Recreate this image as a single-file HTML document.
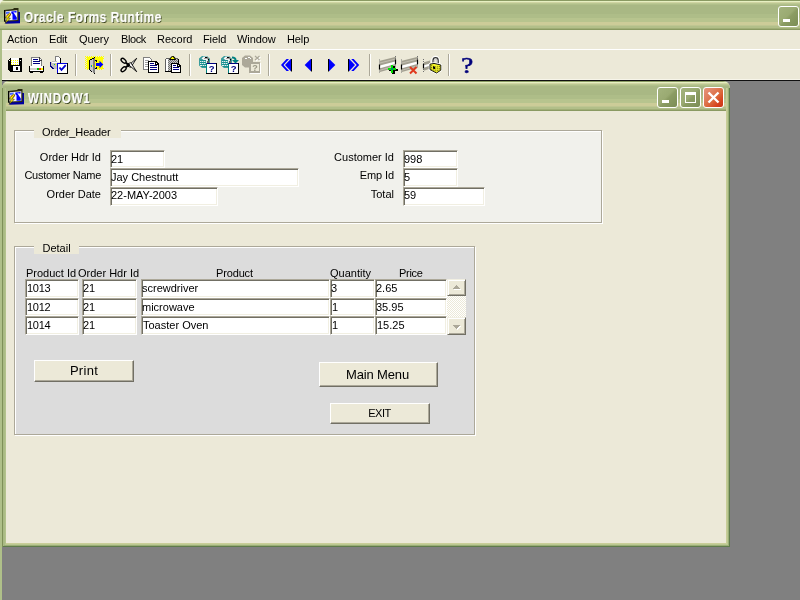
<!DOCTYPE html>
<html lang="en">
<head>
<meta charset="utf-8">
<title>Oracle Forms Runtime</title>
<style>
*{box-sizing:border-box;margin:0;padding:0}
html,body{width:800px;height:600px;overflow:hidden;background:#808080}
#corner{left:0;top:0;width:6px;height:6px;background:#f4f3ea}
#tbhl{left:2px;top:79px;width:798px;height:1px;background:#f7f5ea}
body{position:relative;font-family:"Liberation Sans",sans-serif;font-size:11px;color:#000;line-height:13px}
.abs{position:absolute}
#mtitle{left:0;top:0;width:800px;height:30px;border-top-left-radius:5px;background:linear-gradient(to bottom,#8a9a62 0px,#8a9a62 1px,#e6f0c2 1px,#e6f0c2 2px,#d0d4a2 2px,#d0d4a2 3px,#bac892 3px,#bac892 4px,#b1bf8a 4px,#b1bf8a 5px,#a9b884 5px,#a9b884 14px,#aebd88 14px,#aebd88 18px,#b7c48e 18px,#b7c48e 22px,#cccc98 22px,#cccc98 25px,#bfc692 25px,#bfc692 26px,#b2bf89 26px,#b2bf89 28px,#a0ae76 28px,#a0ae76 29px,#8a9a62 29px,#8a9a62 30px)}
.ttext{-webkit-text-stroke:0.25px #fff;color:#fff;font-weight:bold;white-space:nowrap;text-shadow:1px 1px 0 #39421c;transform-origin:0 0}
#menubar{left:0;top:30px;width:800px;height:20px;background:#ece9d8;border-bottom:1px solid #fff}
#menubar span{position:absolute;top:3px;white-space:nowrap}
#toolbar{left:0;top:50px;width:800px;height:30px;background:#ece9d8}
#tbline{left:0;top:80px;width:800px;height:1px;background:#101010}
#lborder{left:0;top:30px;width:2px;height:570px;background:#afc089}
.sep{position:absolute;top:54px;width:2px;height:22px;border-left:1px solid #aca899;border-right:1px solid #fff}
#child{left:2px;top:81px;width:728px;height:466px;background:#ece9d8;border-radius:7px 7px 0 0;overflow:hidden}
#ctitle{left:0;top:0;width:728px;height:30px;background:linear-gradient(to bottom,#8a9a62 0px,#8a9a62 1px,#e6f0c2 1px,#e6f0c2 2px,#d0d4a2 2px,#d0d4a2 3px,#bac892 3px,#bac892 4px,#b1bf8a 4px,#b1bf8a 5px,#a9b884 5px,#a9b884 14px,#aebd88 14px,#aebd88 18px,#b7c48e 18px,#b7c48e 22px,#cccc98 22px,#cccc98 25px,#bfc692 25px,#bfc692 26px,#b2bf89 26px,#b2bf89 28px,#a0ae76 28px,#a0ae76 29px,#8a9a62 29px,#8a9a62 30px)}
.cframe{left:0;top:7px;width:728px;height:459px;box-shadow:inset 1px 0 0 #7e9058,inset -1px -1px 0 #5f7b4c,inset 2px 0 0 #a9ba83,inset -2px -2px 0 #9bad76,inset 3px 0 0 #abbc85,inset -3px -3px 0 #bac991,inset 4px 0 0 #b3c38c,inset -4px -4px 0 #c9cd99}
.grp{position:absolute;border:1px solid #aca899;box-shadow:inset 1px 1px 0 #fff, 1px 1px 0 #fff}
.legend{position:absolute;background:#ece9d8;height:14px;white-space:nowrap}
.lbl{position:absolute;white-space:nowrap;height:13px}
.lbl,.legend,.fld,.btn,#menubar span,.ttext{will-change:transform}
.r{text-align:right}
.fld{position:absolute;background:#fff;border:1px solid;border-color:#aca899 #fff #fff #aca899;box-shadow:inset 1px 1px 0 #716f64, inset -1px -1px 0 #f1efe2;white-space:nowrap;overflow:hidden;padding:2px 0 0 0;line-height:13px}
.btn{position:absolute;background:#ece9d8;border:1px solid;border-color:#fff #716f64 #716f64 #fff;box-shadow:inset -1px -1px 0 #aca899;text-align:center;white-space:nowrap}
.sbtn{position:absolute;background:#ece9d8;border:1px solid;border-color:#f1efe2 #716f64 #716f64 #f1efe2;box-shadow:inset 1px 1px 0 #fff,inset -1px -1px 0 #aca899}
.cbtn{position:absolute;width:21px;height:21px;border:1px solid #fff;border-radius:3px;background:linear-gradient(135deg,#a3b37d 0,#9aaa72 45%,#8b9c63 55%,#7b8d55 100%)}
.cbtn.x{background:linear-gradient(135deg,#e6957c 0,#e08060 30%,#dc6a3c 55%,#d6421e 80%,#c83818 100%)}
svg{position:absolute;overflow:visible}
</style>
</head>
<body>
<div id="corner" class="abs"></div>
<div id="mtitle" class="abs"></div>
<svg width="18" height="18" viewBox="3 7 18 18" style="left:3px;top:7px">
<path d="M5 20.500L18 20V12h2v11.200L5.500 23.800z" fill="#0000a0"/>
<path d="M4 10L13 9l1-1h4.500V21L4 21.600z" fill="#2a2a10"/>
<path d="M5.500 11.300L17.300 10.200V20L5.500 20.400z" fill="#f4f4fa"/>
<path d="M6 12l3.800-0.400l-1 1.800L6 14z" fill="#4466ff"/><path d="M4 10v11.600h1V10z" fill="#000"/>
<path d="M11.300 11.600l5.200-0.500v1.500l-3-0.200l3.300 5v2.300l-4.300 0.100v-5.500l-1.200-1z" fill="#0000ff"/>
<path d="M13 12l1.500-0.200v1z" fill="#fff"/>
<path d="M6 15l3.500-1.500l1.500 1.500l-2 2.500z" fill="#e86a50"/>
<path d="M9.700 13L4.900 17.700l2.300 0.400L5.300 23.300l5-5l-2.300-0.500l2.900-3.800z" fill="#ffee00" stroke="#141400" stroke-width="0.550" stroke-linejoin="round"/>
</svg>
<div class="abs ttext" id="mt" style="left:23.500px;top:9px;font-size:14px;line-height:16px;letter-spacing:0.6px;transform:scaleX(0.85)">Oracle Forms Runtime</div>
<div class="cbtn" style="left:778px;top:6px"><i class="abs" style="left:4px;top:12px;width:7px;height:3px;background:#fff"></i></div>
<div id="menubar" class="abs">
<span style="left:7px">Action</span><span style="left:49px;letter-spacing:-0.2px">Edit</span><span style="left:79px">Query</span><span style="left:121px;letter-spacing:-0.4px">Block</span><span style="left:157px">Record</span><span style="left:203px;letter-spacing:-0.1px">Field</span><span style="left:237px;letter-spacing:-0.1px">Window</span><span style="left:287px;letter-spacing:-0.1px">Help</span>
</div>
<div id="toolbar" class="abs"></div>
<div id="tbhl" class="abs"></div>
<div id="tbline" class="abs"></div>
<div id="lborder" class="abs"></div>
<div class="sep" style="left:75px"></div>
<div class="sep" style="left:110px"></div>
<div class="sep" style="left:189px"></div>
<div class="sep" style="left:268px"></div>
<div class="sep" style="left:369px"></div>
<div class="sep" style="left:448px"></div>

<div id="child" class="abs">
 <div id="ctitle" class="abs"></div>
 <svg width="18" height="18" viewBox="3 7 18 18" style="left:5px;top:7px">
<path d="M5 20.500L18 20V12h2v11.200L5.500 23.800z" fill="#0000a0"/>
<path d="M4 10L13 9l1-1h4.500V21L4 21.600z" fill="#2a2a10"/>
<path d="M5.500 11.300L17.300 10.200V20L5.500 20.400z" fill="#f4f4fa"/>
<path d="M6 12l3.800-0.400l-1 1.800L6 14z" fill="#4466ff"/><path d="M4 10v11.600h1V10z" fill="#000"/>
<path d="M11.300 11.600l5.200-0.500v1.500l-3-0.200l3.300 5v2.300l-4.300 0.100v-5.500l-1.200-1z" fill="#0000ff"/>
<path d="M13 12l1.500-0.200v1z" fill="#fff"/>
<path d="M6 15l3.500-1.500l1.500 1.500l-2 2.500z" fill="#e86a50"/>
<path d="M9.700 13L4.900 17.700l2.300 0.400L5.300 23.300l5-5l-2.300-0.500l2.900-3.800z" fill="#ffee00" stroke="#141400" stroke-width="0.550" stroke-linejoin="round"/>
</svg>
 <div class="abs ttext" id="ct" style="left:25.500px;top:9px;font-size:14px;line-height:16px;letter-spacing:1px;transform:scaleX(0.82)">WINDOW1</div>
 <div class="abs cframe"></div>
 <div class="cbtn" style="left:655px;top:6px"><i class="abs" style="left:4px;top:12px;width:7px;height:3px;background:#fff"></i></div>
 <div class="cbtn" style="left:678px;top:6px"><i class="abs" style="left:4px;top:4px;width:11px;height:11px;border:1px solid #fff;border-top-width:3px"></i></div>
 <div class="cbtn x" style="left:701px;top:6px"><svg width="19" height="19" viewBox="0 0 19 19" style="left:0;top:0"><path d="M4.500 4.500L14.500 14.500M14.500 4.500L4.500 14.500" stroke="#fff" stroke-width="2.400" fill="none"/></svg></div>
</div>
<svg width="800" height="30" viewBox="0 50 800 30" style="left:0;top:50px;will-change:transform" shape-rendering="crispEdges">
<!-- save -->
<g>
<path d="M10 58h11l1 1v12l-1 1h-11l-2-2v-10z" fill="#000"/>
<rect x="11" y="58" width="8" height="7" fill="#fff"/>
<path d="M11 60h1v1h-1zM13 60h1v1h-1zM15 60h1v1h-1zM17 60h1v1h-1zM11 62h1v1h-1zM13 62h1v1h-1zM15 62h1v1h-1zM17 62h1v1h-1zM11 64h1v1h-1zM13 64h1v1h-1zM15 64h1v1h-1zM17 64h1v1h-1z" fill="#ffff00"/>
<rect x="9" y="60" width="1" height="1" fill="#fff"/><rect x="20" y="60" width="1" height="1" fill="#fff"/>
<rect x="13" y="66" width="7" height="5" fill="#fff"/><rect x="16" y="67" width="2" height="3" fill="#000"/>
</g>
<!-- print -->
<g>
<path d="M31.5 66.5v-9h8l2 2v7z" fill="#fff" stroke="#808080"/>
<path d="M39 57v3h3" fill="none" stroke="#404040"/>
<rect x="33" y="59" width="5" height="1" fill="#000080"/><rect x="33" y="61" width="7" height="1" fill="#000080"/><rect x="33" y="63" width="7" height="1" fill="#000080"/>
<rect x="29" y="66" width="15" height="6" fill="#000"/>
<rect x="30" y="66" width="13" height="5" fill="#fff"/>
<rect x="30" y="68" width="13" height="2" fill="#d4d0c8"/>
<rect x="37" y="68" width="2" height="2" fill="#00c000"/><rect x="39" y="68" width="2" height="2" fill="#e03020"/><rect x="41" y="68" width="2" height="2" fill="#ffff00"/>
<rect x="30" y="72" width="3" height="1" fill="#000"/><rect x="40" y="72" width="3" height="1" fill="#000"/>
</g>
<!-- print setup -->
<g>
<path d="M55.5 62v-5.500h3l2 2v4" fill="#fff" stroke="#808080"/>
<path d="M60.500 58v5" stroke="#000" fill="none"/>
<path d="M50 62l3-1h4v8h-3l-4-3z" fill="#c0c0c0"/>
<path d="M50.500 62v4l3 3" fill="none" stroke="#000080"/>
<rect x="52" y="62" width="5" height="1" fill="#fff"/>
<rect x="54" y="64" width="1" height="1" fill="#00a0a0"/><rect x="55" y="64" width="1" height="1" fill="#ffff00"/>
<rect x="57" y="63" width="11" height="11" fill="#000"/>
<rect x="57" y="63" width="10" height="10" fill="#0000e0"/>
<rect x="58" y="64" width="9" height="9" fill="#fff"/>
<path d="M59.500 67.500l2 2.300l4.200-4.600" fill="none" stroke="#0000d0" stroke-width="1.800" shape-rendering="auto"/>
</g>
<!-- exit -->
<g>
<rect x="87" y="57" width="16" height="12" fill="#ffff00"/><path d="M86 57h1v1h-1zM86 59h1v1h-1zM86 61h1v1h-1zM86 63h1v1h-1zM86 65h1v1h-1zM86 67h1v1h-1z" fill="#ffff00"/>
<path d="M85 56h1v1h-1zM87 56h1v1h-1zM89 56h1v1h-1zM91 56h1v1h-1zM93 56h1v1h-1zM95 56h1v1h-1zM97 56h1v1h-1zM99 56h1v1h-1zM101 56h1v1h-1zM103 56h1v1h-1zM85 58h1v1h-1zM85 60h1v1h-1zM85 62h1v1h-1zM85 64h1v1h-1zM85 66h1v1h-1zM85 68h1v1h-1zM103 58h1v1h-1zM103 68h1v1h-1zM101 69h1v1h-1zM99 69h1v1h-1zM97 69h1v1h-1zM87 69h1v1h-1z" fill="#ffff00"/>
<path d="M89 60l6-3v17l-6-4z" fill="#000"/>
<path d="M90 60.500l3-1.500v13l-3-2z" fill="#c8c8c8"/>
<path d="M93 59l1.500-0.800v15l-1.500-1z" fill="#808080"/>
<rect x="91" y="65" width="1" height="2" fill="#00a0a0"/><rect x="92" y="65" width="1" height="1" fill="#ffff00"/>
<rect x="95" y="60" width="2" height="1" fill="#000"/><rect x="95" y="68" width="2" height="1" fill="#000"/><rect x="96" y="61" width="1" height="1" fill="#000"/><rect x="96" y="67" width="1" height="1" fill="#000"/>
<path d="M96 63h3.500v-2.300l3.800 3.800l-3.800 3.800v-2.300h-3.500z" fill="#0000ff" shape-rendering="auto"/>
</g>
<!-- cut -->
<g shape-rendering="auto" fill="none" stroke="#000">
<ellipse cx="123.600" cy="60.800" rx="3" ry="1.700" transform="rotate(42 123.600 60.800)" stroke-width="1.400"/>
<ellipse cx="123.600" cy="69.200" rx="3" ry="1.700" transform="rotate(-42 123.600 69.200)" stroke-width="1.400"/>
<path d="M127.500 66.200L136.700 58.300L130.800 67.300z" fill="#fff" stroke-width="0.900"/>
<path d="M127.500 63.800L136.700 71.700L130.800 62.700z" fill="#fff" stroke-width="0.900"/>
<path d="M126 62.800L129.500 66M126 67.200L129.500 64" stroke-width="2"/>
</g>
<!-- copy -->
<g>
<path d="M143.500 57.500h6l2 2v9.500h-8z" fill="#fff" stroke="#808080"/>
<rect x="145" y="60" width="4" height="1" fill="#a0a0a0"/><rect x="145" y="62" width="4" height="1" fill="#a0a0a0"/><rect x="145" y="64" width="4" height="1" fill="#a0a0a0"/><rect x="145" y="66" width="4" height="1" fill="#a0a0a0"/>
<path d="M148 61h8l3 3v9h-11z" fill="#000"/>
<path d="M149 62h6.500l2.500 2.500v7.500h-9z" fill="#fff"/>
<path d="M155.500 61.500v3h3" fill="none" stroke="#000"/>
<rect x="150" y="63" width="4" height="1" fill="#000080"/><rect x="150" y="65" width="7" height="1" fill="#000080"/><rect x="150" y="67" width="7" height="1" fill="#000080"/><rect x="150" y="69" width="7" height="1" fill="#000080"/>
</g>
<!-- paste -->
<g>
<defs><pattern id="dth" width="2" height="2" patternUnits="userSpaceOnUse"><rect width="2" height="2" fill="#c8c8c8"/><rect width="1" height="1" fill="#707070"/><rect x="1" y="1" width="1" height="1" fill="#707070"/></pattern></defs><path d="M165.500 59.500l1-1h11l1 1v12h-13z" fill="url(#dth)" stroke="#606060"/>
<rect x="165" y="71" width="8" height="1" fill="#000"/>
<rect x="166" y="59" width="2" height="12" fill="#fff"/>
<path d="M169 60l1.500-2.500l1.500-1.500h1.500l1.500 1.500l1 2.500z" fill="#000" shape-rendering="auto"/>
<path d="M170.500 59l2-2.500l2.200 2.500z" fill="#ffff00" shape-rendering="auto"/>
<rect x="178" y="59" width="1" height="4" fill="#000"/>
<path d="M171 63h7l3 3v7h-10z" fill="#000"/>
<path d="M172 64h5.500l2.500 2.500v5.500h-8z" fill="#fff"/>
<path d="M177.500 63.500v3h3" fill="none" stroke="#000"/>
<rect x="173" y="65" width="3" height="1" fill="#000080"/><rect x="173" y="67" width="6" height="1" fill="#000080"/><rect x="173" y="69" width="6" height="1" fill="#000080"/>
</g>
<!-- enter query -->
<g>
<path d="M199 58.500l3-2.500h5l3 2.500v7l-3 2.500h-5l-3-2.500z" fill="#3a9c9c" shape-rendering="auto"/>
<path d="M200 59.500h8v6l-1 1.500h-5l-2-1.500z" fill="#e4f0f0"/>
<path d="M200 60h6v1h-6zM200 62h6v1h-6zM200 64h6v1h-6zM201 66h5v1h-5z" fill="#189090"/>
<path d="M201 61h1v1h-1zM203 61h1v1h-1zM205 61h1v1h-1zM201 63h1v1h-1zM203 63h1v1h-1zM205 63h1v1h-1zM202 65h1v1h-1zM204 65h1v1h-1z" fill="#70b8b8"/>
<path d="M201.500 58.500l2-2h3.500l2.500 2l-2.500 1.500h-3.500z" fill="#f4f4f4" shape-rendering="auto"/>
<path d="M205 57.500h2l1.500 1.300v1.700" stroke="#000" fill="none" shape-rendering="auto" stroke-width="1"/>
<rect x="204" y="58" width="3" height="1" fill="#a0a0a0"/>
<rect x="207" y="61" width="2" height="2" fill="#606060"/>
</g>
<g>
<rect x="206" y="63" width="11" height="11" fill="#000"/>
<rect x="206" y="63" width="10" height="10" fill="#008080"/>
<rect x="207" y="63" width="9" height="1" fill="#000080"/>
<rect x="207" y="64" width="9" height="9" fill="#fff"/>
</g>
<text x="211.600" y="72.400" font-family="Liberation Sans, sans-serif" font-weight="bold" font-size="9.500" fill="#000080" text-anchor="middle">?</text>
<!-- execute query -->
<g transform="translate(22 0)">
<path d="M199 58.500l3-2.500h5l3 2.500v7l-3 2.500h-5l-3-2.500z" fill="#3a9c9c" shape-rendering="auto"/>
<path d="M200 59.500h8v6l-1 1.500h-5l-2-1.500z" fill="#e4f0f0"/>
<path d="M200 60h6v1h-6zM200 62h6v1h-6zM200 64h6v1h-6zM201 66h5v1h-5z" fill="#189090"/>
<path d="M201 61h1v1h-1zM203 61h1v1h-1zM205 61h1v1h-1zM201 63h1v1h-1zM203 63h1v1h-1zM205 63h1v1h-1zM202 65h1v1h-1zM204 65h1v1h-1z" fill="#70b8b8"/>
<path d="M201.500 58.500l2-2h3.500l2.500 2l-2.500 1.500h-3.500z" fill="#f4f4f4" shape-rendering="auto"/>
<path d="M205 57.500h2l1.500 1.300v1.700" stroke="#000" fill="none" shape-rendering="auto" stroke-width="1"/>
<rect x="204" y="58" width="3" height="1" fill="#a0a0a0"/>
<rect x="207" y="61" width="2" height="2" fill="#606060"/>
</g><g transform="translate(22 0)">
<rect x="206" y="63" width="11" height="11" fill="#000"/>
<rect x="206" y="63" width="10" height="10" fill="#008080"/>
<rect x="207" y="63" width="9" height="1" fill="#000080"/>
<rect x="207" y="64" width="9" height="9" fill="#fff"/>
</g>
<text x="233.600" y="72.400" font-family="Liberation Sans, sans-serif" font-weight="bold" font-size="9.500" fill="#000080" text-anchor="middle">?</text>
<path d="M232 56.500c3 0 4.500 1.500 4.500 3.500h2.500l-3.500 3.500l-3.500-3.500h2.500c0-1-1-1.500-2.500-1.500z" fill="#008080" shape-rendering="auto"/>
<!-- cancel query (disabled) -->
<g>
<path d="M242 58l3-2.500h5l3 2.500v7l-3 2.500h-5l-3-2.500z" fill="#aca899" shape-rendering="auto"/>
<path d="M245 58.500h1.500l1.500-1h2l1 1" stroke="#fff" fill="none" stroke-dasharray="2 1"/>
<path d="M255 56l4.500 4M259.500 56l-4.500 4" stroke="#fff" stroke-width="1.200" fill="none" shape-rendering="auto" transform="translate(1 1)"/>
<path d="M255 56l4.500 4M259.500 56l-4.500 4" stroke="#aca899" stroke-width="1.200" fill="none" shape-rendering="auto"/>
<rect x="250" y="63" width="11" height="11" fill="#fff"/>
<rect x="249" y="62" width="11" height="11" fill="#aca899"/>
<rect x="251" y="64" width="8" height="7" fill="#ece9d8"/>
</g>
<text x="255" y="71.200" font-family="Liberation Sans, sans-serif" font-weight="bold" font-size="9" fill="#9a9786" text-anchor="middle">?</text>
<!-- nav: first -->
<g shape-rendering="auto">
<path d="M281 65l5.500-6h2.500l-5.500 6l5.500 6h-2.500z" fill="#0000ff"/>
<path d="M285 65l6-6.200v12.400z" fill="#0000ff"/>
<rect x="291" y="59" width="1" height="12.500" fill="#000"/>
<!-- prev -->
<path d="M304.700 65l6.300-6.200v12.400z" fill="#0000ff"/>
<rect x="311" y="59" width="1" height="12.500" fill="#000"/>
<!-- next -->
<path d="M335.300 65l-6.300-6.200v12.400z" fill="#0000ff"/>
<rect x="328" y="59" width="1" height="12.500" fill="#000"/>
<!-- last -->
<path d="M359.200 65l-5.500-6h-2.500l5.500 6l-5.500 6h2.500z" fill="#0000ff"/>
<path d="M355 65l-6-6.200v12.400z" fill="#0000ff"/>
<rect x="348" y="59" width="1" height="12.500" fill="#000"/>
</g>
<!-- insert record -->
<g shape-rendering="auto">
<path d="M380 60.800L396 56.800V67.500L380 72z" fill="#a3a091"/>
<path d="M380 65.500L396 61.200V63.700L380 68.200z" fill="#fff"/>
<path d="M380 63L396 58.900M380 70.200L396 65.800" stroke="#d6d4c8" stroke-width="0.600" fill="none"/>
<path d="M379.500 59.500v14" stroke="#707070" stroke-dasharray="1 1" fill="none"/>
<path d="M379.500 64.500v5" stroke="#000" fill="none" stroke-width="1.200"/>
<path d="M395.500 56v9" stroke="#707070" stroke-dasharray="1 1" fill="none"/>
<path d="M395.500 59.500v4.500" stroke="#000" fill="none" stroke-width="1.200"/>
</g>
<g>
<path d="M392 66h3v3h3v2h-3v3h-3v-3h-3v-2h3z" fill="#000" transform="translate(-0.500 -0.500)"/>
<path d="M391 65h2v3h3v2h-3v3h-2v-3h-3v-2h3z" fill="#00e000"/>
<rect x="391" y="68" width="2" height="2" fill="#008080"/>
</g>
<!-- delete record -->
<g transform="translate(22 0)" shape-rendering="auto">
<path d="M380 60.800L396 56.800V67.500L380 72z" fill="#a3a091"/>
<path d="M380 65.500L396 61.200V63.700L380 68.200z" fill="#fff"/>
<path d="M380 63L396 58.900M380 70.200L396 65.800" stroke="#d6d4c8" stroke-width="0.600" fill="none"/>
<path d="M379.500 59.500v14" stroke="#707070" stroke-dasharray="1 1" fill="none"/>
<path d="M379.500 64.500v5" stroke="#000" fill="none" stroke-width="1.200"/>
<path d="M395.500 56v9" stroke="#707070" stroke-dasharray="1 1" fill="none"/>
<path d="M395.500 59.500v4.500" stroke="#000" fill="none" stroke-width="1.200"/>
</g>
<path d="M410 67l6.500 6.500M416.500 67l-6.500 6.500" stroke="#e03a1e" stroke-width="2" fill="none" shape-rendering="auto"/>
<!-- lock -->
<g shape-rendering="auto">
<path d="M424 62.200L430 60.500V68.500L424 70.800z" fill="#a3a091"/>
<path d="M424 65.300L430 63.600V65.600L424 67.800z" fill="#fff"/>
<path d="M423.500 59v14" stroke="#707070" stroke-dasharray="1 1" fill="none"/>
<path d="M423.500 64v4.500" stroke="#000" fill="none" stroke-width="1.200"/>
<path d="M433 65v-4.500a2.600 2.800 0 0 1 5.200 0v4.500" fill="none" stroke="#fff" stroke-width="3.800"/>
<path d="M433 65v-4.500a2.600 2.800 0 0 1 5.200 0v4.500" fill="none" stroke="#303030" stroke-width="1.200"/>
<path d="M434.300 65v-4.300a1.300 1.500 0 0 1 2.600 0v4.300" fill="none" stroke="#b0b0b0" stroke-width="0.800"/>
<path d="M430 64.200l4-0.800l6.800 1.600v5.200l-4.300 2.800l-6.500-3.400z" fill="#f6f62a" stroke="#fff" stroke-width="2.400" stroke-linejoin="round"/>
<path d="M430 64.200l4-0.800l6.800 1.600v5.200l-4.300 2.800l-6.500-3.400z" fill="#f6f62a" stroke="#000" stroke-width="0.900" stroke-linejoin="round"/>
<path d="M431 65.600l5 1.500l4.500-0.700M431 67.400l5 1.600l4.500-0.800M431 69.100l5 1.900l4.500-1.400" stroke="#3c3c00" stroke-width="0.700" stroke-dasharray="1.200 0.800" fill="none"/>
<path d="M433 66.200l2 0.500v2.600l-2-0.700z" fill="#000"/>
</g>
<!-- help -->
<text x="0" y="0" transform="translate(467.300 73) scale(1.150 1)" font-family="Liberation Serif, serif" font-size="23.500" fill="#00007b" stroke="#00007b" stroke-width="0.600" text-anchor="middle">?</text>
</svg>
<!-- Order_Header group -->
<div class="grp" style="left:14px;top:130px;width:588px;height:93px;background:#f1f1ec"></div>
<div class="legend" style="left:34px;top:124px;width:87px;padding:2px 0 0 8px;letter-spacing:-0.15px">Order_Header</div>
<div class="lbl r" style="left:20px;width:81px;top:151px">Order Hdr Id</div>
<div class="lbl r" style="left:10px;width:91px;top:169px;letter-spacing:-0.27px">Customer Name</div>
<div class="lbl r" style="left:20px;width:81px;top:188px">Order Date</div>
<div class="fld" style="left:110px;top:150px;width:55px;height:18px;padding:2px 0 0 0px">21</div>
<div class="fld" style="left:110px;top:168px;width:189px;height:19px;padding:2px 0 0 0px">Jay Chestnutt</div>
<div class="fld" style="left:110px;top:187px;width:108px;height:19px;padding:1px 0 0 0px">22-MAY-2003</div>
<div class="lbl r" style="left:313px;width:81px;top:151px;letter-spacing:0">Customer Id</div>
<div class="lbl r" style="left:313px;width:81px;top:169px;letter-spacing:-0.1px">Emp Id</div>
<div class="lbl r" style="left:313px;width:81px;top:188px">Total</div>

<div class="fld" style="left:403px;top:150px;width:55px;height:18px;padding:2px 0 0 0px">998</div>
<div class="fld" style="left:403px;top:168px;width:55px;height:19px;padding:2px 0 0 0px">5</div>
<div class="fld" style="left:403px;top:187px;width:82px;height:19px;padding:1px 0 0 0px">59</div>

<!-- Detail group -->
<div class="grp" style="left:14px;top:246px;width:461px;height:189px;background:#dcdcdc"></div>
<div class="legend" style="left:34px;top:240px;width:45px;padding:2px 0 0 8.500px;letter-spacing:0">Detail</div>
<div class="lbl" style="left:25.500px;top:267px">Product Id</div>
<div class="lbl" style="left:78px;top:267px">Order Hdr Id</div>
<div class="lbl" style="left:216px;top:267px;letter-spacing:-0.15px">Product</div>
<div class="lbl" style="left:330px;top:267px">Quantity</div>
<div class="lbl" style="left:399px;top:267px;letter-spacing:-0.3px">Price</div>




<div class="fld" style="left:25px;top:279px;width:54px;height:19px;padding:2px 0 0 1px;letter-spacing:-0.3px">1013</div>
<div class="fld" style="left:82px;top:279px;width:55px;height:19px;padding:2px 0 0 0px">21</div>
<div class="fld" style="left:141px;top:279px;width:189px;height:19px;padding:2px 0 0 0px">screwdriver</div>
<div class="fld" style="left:330px;top:279px;width:45px;height:19px;padding:2px 0 0 0px">3</div>
<div class="fld" style="left:375px;top:279px;width:72px;height:19px;padding:2px 0 0 0px">2.65</div>
<div class="fld" style="left:25px;top:298px;width:54px;height:18px;padding:2px 0 0 1px;letter-spacing:-0.3px">1012</div>
<div class="fld" style="left:82px;top:298px;width:55px;height:18px;padding:2px 0 0 0px">21</div>
<div class="fld" style="left:141px;top:298px;width:189px;height:18px;padding:2px 0 0 0px">microwave</div>
<div class="fld" style="left:330px;top:298px;width:45px;height:18px;padding:2px 0 0 1px">1</div>
<div class="fld" style="left:375px;top:298px;width:72px;height:18px;padding:2px 0 0 0px">35.95</div>
<div class="fld" style="left:25px;top:316px;width:54px;height:19px;padding:2px 0 0 1px;letter-spacing:-0.3px">1014</div>
<div class="fld" style="left:82px;top:316px;width:55px;height:19px;padding:2px 0 0 0px">21</div>
<div class="fld" style="left:141px;top:316px;width:189px;height:19px;padding:2px 0 0 1px">Toaster Oven</div>
<div class="fld" style="left:330px;top:316px;width:45px;height:19px;padding:2px 0 0 1px">1</div>
<div class="fld" style="left:375px;top:316px;width:72px;height:19px;padding:2px 0 0 1px">15.25</div>

<!-- scrollbar -->
<div class="abs" style="left:447px;top:279px;width:19px;height:56px;background:repeating-conic-gradient(#fff 0 25%,#ece9d8 0 50%) 0 0/2px 2px"></div>
<div class="sbtn" style="left:447px;top:279px;width:19px;height:17px"><svg width="17" height="15" viewBox="0 0 17 15" style="left:0;top:0" shape-rendering="crispEdges"><path d="M5 10h8l-4-4z" fill="#fff"/><path d="M4 9h8l-4-4z" fill="#aca899"/></svg></div>
<div class="sbtn" style="left:447px;top:317px;width:19px;height:18px"><svg width="17" height="16" viewBox="0 -1 17 16" style="left:0;top:0" shape-rendering="crispEdges"><path d="M5 7h8l-4 4z" fill="#fff"/><path d="M4 6h8l-4 4z" fill="#aca899"/></svg></div>

<div class="btn" style="left:34px;top:360px;width:100px;height:22px;font-size:13px;line-height:20px;letter-spacing:0.3px">Print</div>
<div class="btn" style="left:319px;top:362px;width:119px;height:25px;font-size:13px;line-height:23px;letter-spacing:-0.15px;padding-right:2px">Main Menu</div>
<div class="btn" style="left:330px;top:403px;width:100px;height:21px;font-size:11px;line-height:19px;letter-spacing:-0.5px;padding-right:1px">EXIT</div>
</body>
</html>
